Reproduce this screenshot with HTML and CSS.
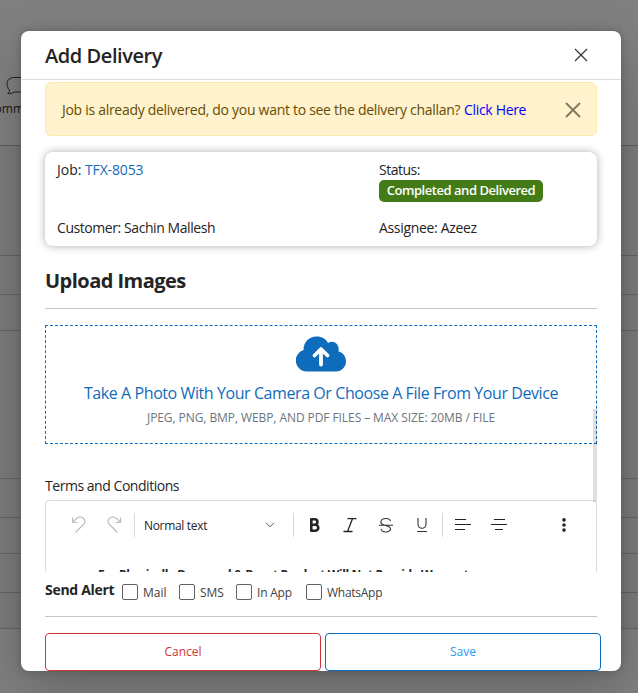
FILE: index.html
```
<!DOCTYPE html>
<html lang="en">
<head>
<meta charset="utf-8">
<title>Add Delivery</title>
<link rel="stylesheet" href="styles.css">
</head>
<body>
<div class="page">
  <div class="page-top">
    <div class="comments">
      <svg class="bubble" width="22" height="20" viewBox="0 0 22 20" fill="none" stroke="#222" stroke-width="1"><path d="M1.500 17.500c1.500-1 2.500-2 2-3.500C-.5 10 0 2 7.500 1.500h10a5 5 0 0 1 3 9c-1.500 4.500-5 5.500-9 5.500H8c-2 1.500-4 1.800-6.500 1.500z"/></svg>
      <span class="comments-label">Comments</span>
    </div>
  </div>
  <div class="row row-tall"></div>
  <div class="row row-39"></div>
  <div class="row row-36"></div>
  <div class="row row-148"></div>
  <div class="row row-39"></div>
  <div class="row row-36"></div>
  <div class="row row-39"></div>
  <div class="row row-36"></div>
</div>
<div class="overlay">
  <section class="modal">
    <header class="modal-header">
      <h1 class="title">Add Delivery</h1>
      <svg class="close" width="14" height="14" viewBox="0 0 14 14" stroke="#333" stroke-width="1.2"><path d="M1 1l12 12M13 1L1 13"/></svg>
    </header>
    <div class="modal-body">
      <div class="scroll">
        <div class="alert">
          <p class="alert-text"><span class="question">Job is already delivered, do you want to see the delivery challan?</span><a class="here">Click Here</a></p>
          <svg class="dismiss" width="16" height="16" viewBox="0 0 16 16" stroke="#807960" stroke-width="1.8" stroke-linecap="round"><path d="M1.500 1.500l13 13M14.500 1.500l-13 13"/></svg>
        </div>
        <div class="card">
          <div class="cell job"><span class="job-label">Job:</span><a class="job-link">TFX-8053</a></div>
          <div class="cell"><div class="status-label">Status:</div><span class="badge">Completed and Delivered</span></div>
          <div class="cell customer">Customer: Sachin Mallesh</div>
          <div class="cell assignee">Assignee: Azeez</div>
        </div>
        <h2 class="section-title">Upload Images</h2>
        <hr class="rule">
        <div class="dropzone">
          <svg class="cloud" width="50" height="36" viewBox="0 0 50 36"><path fill="#0f6cbd" d="M11 35.500A11 11 0 0 1 7.500 14C7.500 6 13 .5 20.500.5c5.500 0 9.500 2.500 11.500 6.500 5-3.500 12 .5 10.500 8.500 4.500 1 7.500 5 7.500 9.800 0 6-4.500 10.200-10 10.200z"/><path d="M25 28.500V13.500M18.500 19.500l6.500-6.500 6.500 6.500" fill="none" stroke="#fff" stroke-width="3.800" stroke-linecap="round" stroke-linejoin="round"/></svg>
          <div class="drop-title">Take A Photo With Your Camera Or Choose A File From Your Device</div>
          <div class="drop-hint">JPEG, PNG, BMP, WEBP, AND PDF FILES – MAX SIZE: 20MB / FILE</div>
        </div>
        <label class="terms-label">Terms and Conditions</label>
        <div class="editor">
          <div class="toolbar">
            <svg class="undo" width="16" height="18" viewBox="0 0 16 18" fill="none" stroke="#bdbdbd" stroke-width="1.200"><path d="M1.500 1.500v5h5M1.700 6.200L5.500 2.500c5-4.200 11 1.500 7 6L4.500 16.500"/></svg>
            <svg class="redo" width="16" height="18" viewBox="0 0 16 18" fill="none" stroke="#bdbdbd" stroke-width="1.200"><path d="M14.500 1.500v5h-5M14.300 6.200L10.500 2.500c-5-4.200-11 1.500-7 6l8 8"/></svg>
            <i class="sep"></i>
            <span class="style-name">Normal text</span>
            <svg class="chevron" width="10" height="6" viewBox="0 0 10 6" fill="none" stroke="#555" stroke-width="1"><path d="M1 .8l4 4 4-4"/></svg>
            <i class="sep"></i>
            <svg class="bold" width="12" height="16" viewBox="0 0 12 16" fill="none" stroke="#242424" stroke-width="2.600" stroke-linejoin="round"><path d="M2.300 2.300h3.400a2.700 2.700 0 0 1 0 5.400H2.300zM2.300 7.700h4a3 3 0 0 1 0 6h-4z"/></svg>
            <svg class="italic" width="16" height="16" viewBox="0 0 16 16" fill="none" stroke="#242424" stroke-width="1.300"><path d="M5.500 1.700h9M1.500 14.500h9M10.500 1.700l-5 12.800"/></svg>
            <svg class="strike" width="16" height="16" viewBox="0 0 16 16" fill="none" stroke="#333" stroke-width="1.100"><path d="M1 8.300h14M12.500 4C12 2.300 10.500 1.500 8 1.500c-6 0-6.500 5-2.500 6.300l5 1.700c4 2 1.500 5.500-2.500 5.500-3 0-4.800-1.300-5-3.200"/></svg>
            <svg class="underline" width="12" height="16" viewBox="0 0 12 16" fill="none" stroke="#333" stroke-width="1.100"><path d="M2 1v6.200a4 4 0 0 0 8 0V1M1 14.500h10"/></svg>
            <i class="sep"></i>
            <svg class="left" width="16" height="12" viewBox="0 0 16 12" stroke="#242424"><path d="M0 .5h11M0 5.500h16M0 10.500h10"/></svg>
            <svg class="center" width="16" height="12" viewBox="0 0 16 12" stroke="#242424"><path d="M3 .5h11M0 5.500h16M4 10.500h8"/></svg>
            <svg class="more" width="4" height="14" viewBox="0 0 4 14" fill="#242424"><circle cx="2" cy="1.900" r="1.800"/><circle cx="2" cy="7" r="1.800"/><circle cx="2" cy="12.100" r="1.800"/></svg>
          </div>
          <p class="terms-text">For Physically Damaged &amp; Burnt Product Will Not Provide Warranty</p>
        </div>
        <i class="scrollbar"></i>
      </div>
      <div class="alerts">
        <strong class="send">Send Alert</strong>
        <span class="option mail"><i class="box"></i><span class="name">Mail</span></span>
        <span class="option sms"><i class="box"></i><span class="name">SMS</span></span>
        <span class="option in-app"><i class="box"></i><span class="name">In App</span></span>
        <span class="option whatsapp"><i class="box"></i><span class="name">WhatsApp</span></span>
      </div>
      <hr class="rule">
      <div class="actions">
        <button class="button cancel">Cancel</button>
        <button class="button save">Save</button>
      </div>
    </div>
  </section>
</div>
</body>
</html>
```
FILE: styles.css
```
* { box-sizing: border-box; }
body {
  margin: 0;
  height: 693px;
  overflow: hidden;
  position: relative;
  font: 14px/20px "Open Sans", "Noto Sans", sans-serif;
  color: #242424;
}
svg { display: block; flex: none; }
h1, h2, p { margin: 0; }

.page { height: 693px; background: #808080; overflow: hidden; }
.page-top { height: 146px; padding-top: 76px; border-bottom: 1px solid #5e5e5e; }
.comments { width: 60px; margin-left: -12px; display: flex; flex-direction: column; }
.bubble { margin-left: 18px; }
.comments-label { font-size: 12px; line-height: 16px; margin: 5px 0 0 -1px; color: #171717; }
.row { background: #7c7c7c; border-bottom: 1px solid #656565; }
.row-tall { height: 110px; }
.row-39 { height: 39px; }
.row-36 { height: 36px; }
.row-148 { height: 148px; }

.overlay { position: absolute; inset: 0; padding: 31px 17px 22px 21px; }
.modal {
  height: 640px;
  background: #fff;
  border-radius: 8px;
  overflow: hidden;
  box-shadow: 0 20px 56px rgba(0, 0, 0, .22), 0 0 8px rgba(0, 0, 0, .22);
}
.modal-header {
  height: 49px;
  padding: 0 33px 0 24px;
  display: flex;
  align-items: center;
  justify-content: space-between;
  border-bottom: 1px solid #dcdcdc;
}
.title { font-size: 20px; line-height: 28px; font-weight: 600; letter-spacing: -.43px; margin-top: 2px; }
.modal-body { padding: 0 24px; }
.scroll { height: 492px; padding-top: 2px; overflow: hidden; position: relative; margin: 0 -12px; padding-left: 12px; padding-right: 12px; }

.alert {
  height: 54px;
  padding: 0 15px 0 16px;
  display: flex;
  align-items: center;
  justify-content: space-between;
  background: #fff2cd;
  border: 1px solid #ffe8ae;
  border-radius: 6px;
  color: #664d03;
}
.alert-text { display: flex; gap: 3px; margin-top: 1px; white-space: nowrap; }
.dismiss { margin-top: 2px; }
.question { width: 399px; letter-spacing: -.29px; }
.here { color: #00f; letter-spacing: -.32px; }

.card {
  height: 94px;
  margin-top: 16px;
  padding: 8px 12px;
  display: grid;
  grid-template: 58px 20px / 322px 1fr;
  border-radius: 8px;
  box-shadow: 0 0 8px rgba(0, 0, 0, .32);
}
.job { display: flex; gap: 3px; }
.job-label { width: 25px; }
.job-link { color: #0f6cbd; letter-spacing: -.15px; }
.customer { letter-spacing: -.43px; }
.status-label { letter-spacing: -.5px; }
.assignee { letter-spacing: -.33px; }
.badge {
  display: block;
  width: 164px;
  height: 22px;
  border-radius: 5px;
  background: #437b16;
  color: #fff;
  text-align: center;
  font-size: 13px;
  line-height: 21px;
  font-weight: 600;
  letter-spacing: -.46px;
}

.section-title { margin-top: 21px; font-size: 20px; line-height: 28px; letter-spacing: -.53px; }
.rule { margin: 0; height: 1px; border: 0; background: #c4c4c4; }
.scroll .rule { margin: 13px 0 16px; }

.dropzone {
  height: 119px;
  padding-top: 11px;
  display: flex;
  flex-direction: column;
  align-items: center;
  border: 1px dashed #0f6cbd;
  white-space: nowrap;
}
.cloud { margin-top: -1px; }
.drop-title { margin-top: 10px; font-size: 16px; line-height: 22px; letter-spacing: -.42px; color: #0f6cbd; }
.drop-hint { margin-top: 6px; font-size: 12px; line-height: 16px; letter-spacing: -.08px; color: #6c757d; }
.terms-label { display: block; margin-top: 32px; height: 24px; line-height: 20px; letter-spacing: -.46px; }

.editor { height: 140px; border: 1px solid #dcdcdc; border-radius: 4px; }
.toolbar { height: 48px; padding-left: 25px; display: flex; align-items: center; }
.redo { margin-left: 19px; }
.sep { width: 1px; height: 24px; background: #d9d9d9; flex: none; }
.redo + .sep { margin-left: 12px; }
.style-name { width: 63px; margin: 2px 0 0 9px; font-size: 12px; letter-spacing: -.32px; white-space: nowrap; }
.chevron { margin-left: 58px; }
.chevron + .sep { margin-left: 18px; }
.bold { margin-left: 15px; }
.italic { margin-left: 21px; }
.strike { margin-left: 20px; }
.underline { margin-left: 22px; }
.underline + .sep { margin-left: 14px; }
.left { margin-left: 12px; }
.center { margin-left: 20px; }
.more { margin-left: 55px; }
.terms-text { margin: 16px 0 0 52px; font-size: 12px; line-height: 20px; font-weight: 700; letter-spacing: -.39px; white-space: nowrap; }
.scrollbar { position: absolute; right: 12px; top: 329px; width: 4px; height: 93px; background: rgba(0, 0, 0, .12); }

.alerts { height: 44px; display: flex; align-items: flex-start; white-space: nowrap; }
.send { width: 77px; margin-top: 8px; font-size: 14px; line-height: 20px; letter-spacing: -.3px; }
.option { display: flex; align-items: center; height: 16px; margin-top: 12px; gap: 5px; font-size: 12px; line-height: 16px; color: #424242; }
.name { margin-top: 2px; }
.box { width: 16px; height: 16px; border: 1px solid #616161; border-radius: 2px; }
.mail, .sms { width: 57px; }
.in-app { width: 70px; letter-spacing: -.2px; }
.whatsapp { letter-spacing: -.27px; }

.actions { display: grid; grid-template-columns: 276px 276px; gap: 4px; margin-top: 16px; width: 556px; }
.button {
  height: 38px;
  padding: 0;
  border: 1px solid;
  border-radius: 4px;
  background: #fff;
  font: 500 12px/16px "Open Sans", "Noto Sans", sans-serif;
}
.cancel { border-color: #d13438; color: #d13438; }
.save { border-color: #0f6cbd; color: #2899f5; }
```
